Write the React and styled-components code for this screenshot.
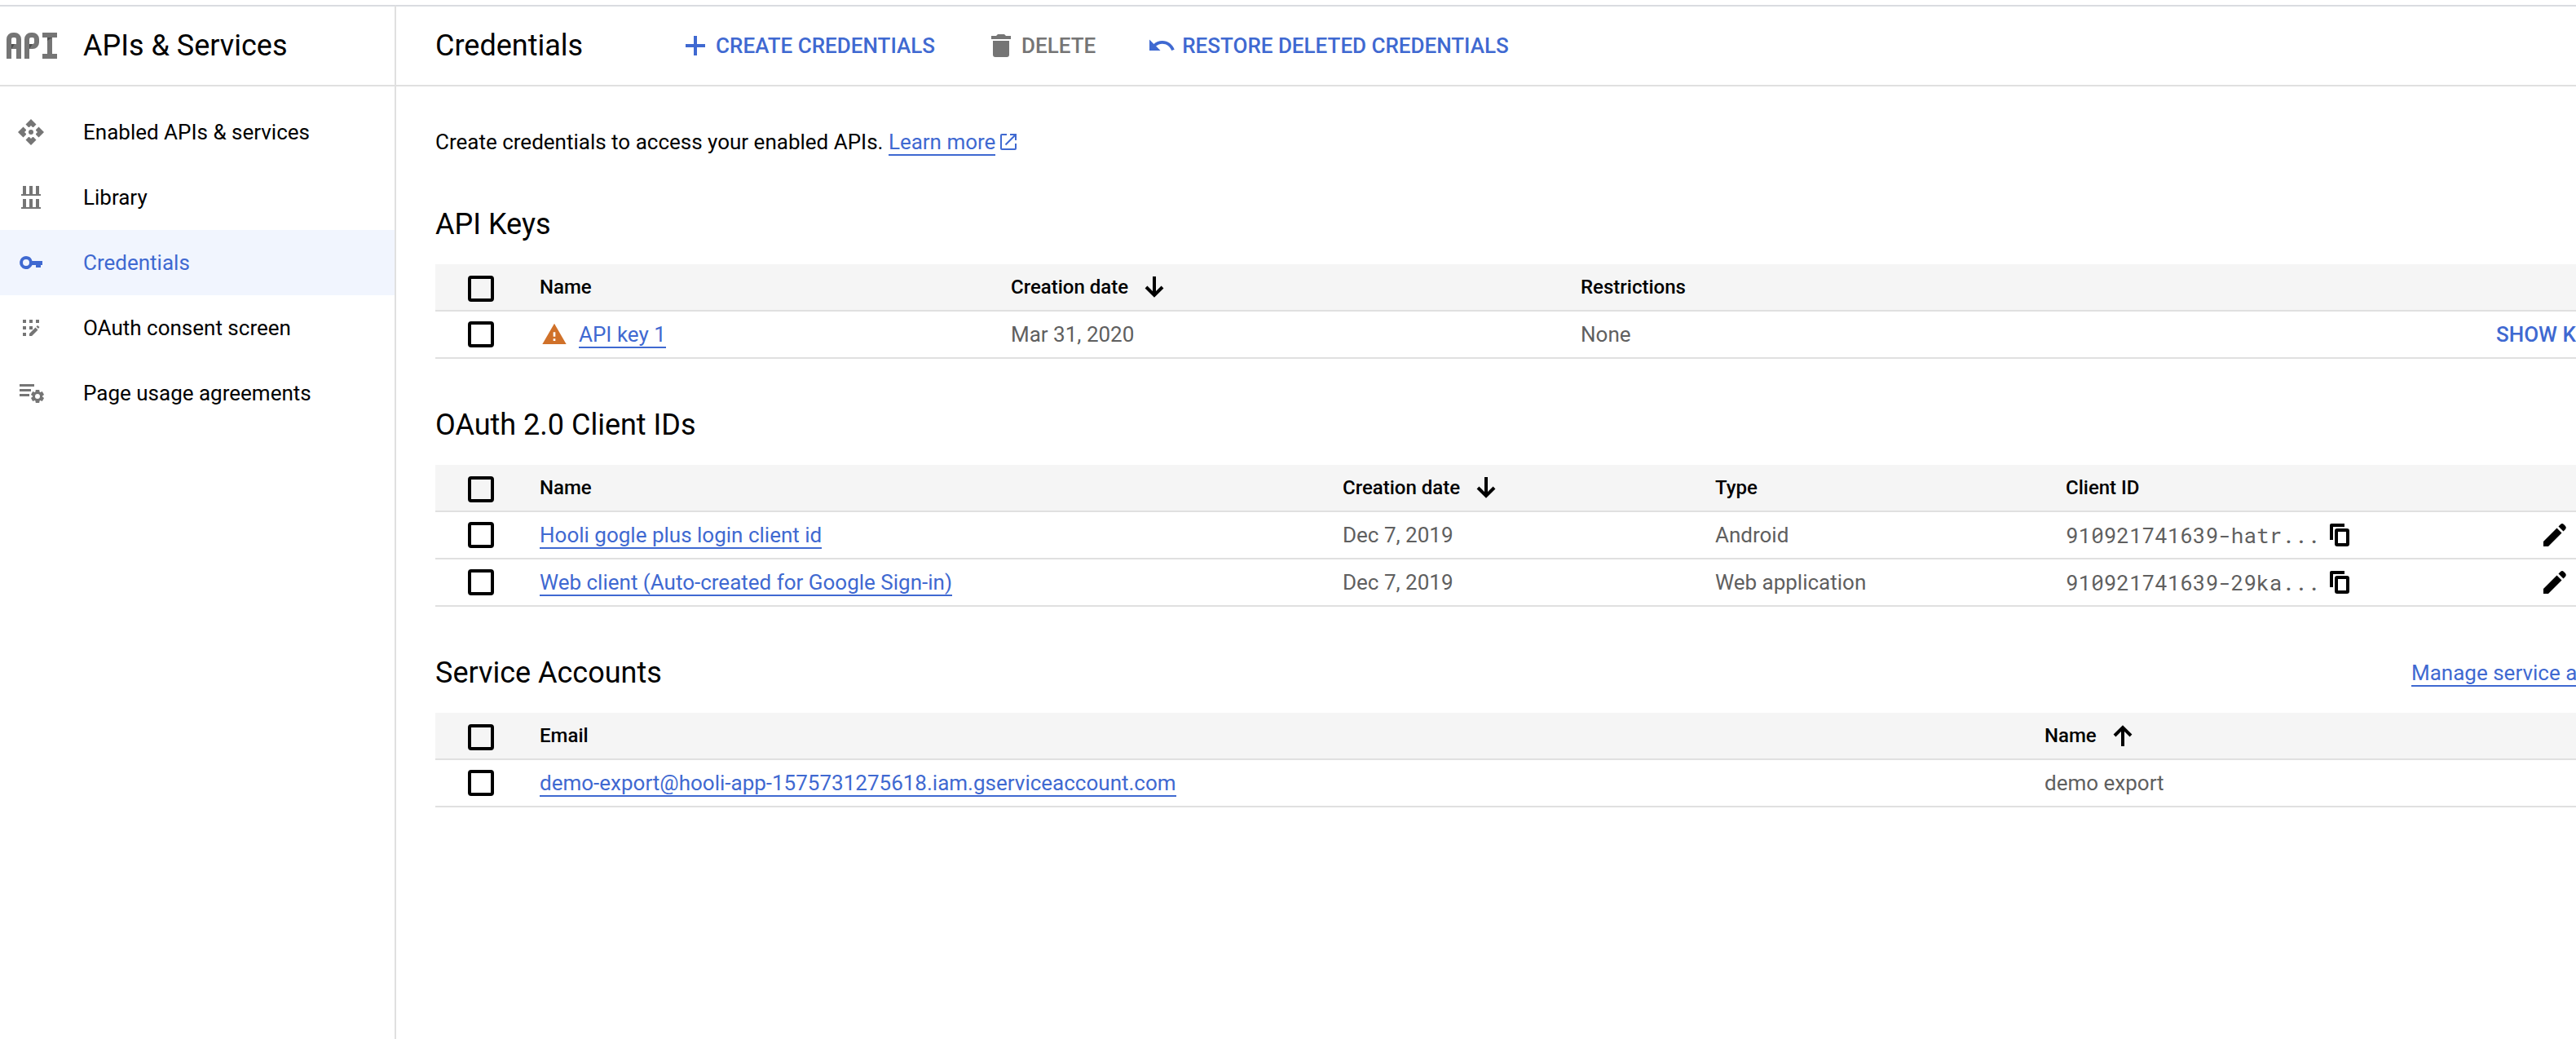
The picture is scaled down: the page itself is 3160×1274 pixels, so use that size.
import React from "react";
import styled, { createGlobalStyle } from "styled-components";
import { MdUndo, MdWarning } from "react-icons/md";

const blue = "#3f69d1";
const iconGray = "#757575";
const line = "#e0e0e0";

const GlobalStyle = createGlobalStyle`
  *, *::before, *::after { box-sizing: border-box; }
  body {
    margin: 0;
    background: #fff;
    color: #000;
    font-family: Roboto, "Liberation Sans", sans-serif;
    font-size: 26px;
    line-height: 40px;
    overflow-x: hidden;
  }
  svg { display: block; flex: none; }
`;

const Shell = styled.div`
  display: flex;
  min-height: 100vh;
  padding-top: 6px;
`;

const Sidebar = styled.aside`
  flex: none;
  width: 486px;
  border-top: 2px solid #dadce0;
  border-right: 2px solid ${line};
`;

const Brand = styled.div`
  display: flex;
  align-items: center;
  gap: 32px;
  height: 98px;
  padding-left: 8px;
  border-bottom: 2px solid ${line};
`;

const Title = styled.h1`
  margin: 0;
  font-size: 36px;
  line-height: 42px;
  font-weight: 400;
  white-space: nowrap;
`;

const NavList = styled.nav`
  display: flex;
  flex-direction: column;
  padding-top: 16px;
`;

const NavLink = styled.a`
  display: flex;
  align-items: center;
  gap: 46px;
  height: 80px;
  padding-left: 20px;
  text-decoration: none;
  color: ${(p) => (p.$active ? blue : "#000")};
  background: ${(p) => (p.$active ? "#f1f5fe" : "transparent")};

  svg { color: ${(p) => (p.$active ? blue : iconGray)}; }
`;

const Main = styled.main`
  flex: 1;
  min-width: 0;
  overflow: hidden;
  border-top: 2px solid #dadce0;
`;

const Toolbar = styled.header`
  display: flex;
  align-items: center;
  gap: 120px;
  height: 98px;
  padding-left: 48px;
  border-bottom: 2px solid ${line};
`;

const Actions = styled.div`
  display: flex;
  gap: 63px;
`;

const TextButton = styled.button`
  display: inline-flex;
  align-items: center;
  gap: 7px;
  padding: 0;
  border: 0;
  background: none;
  color: ${(p) => (p.disabled ? iconGray : blue)};
  font: inherit;
  font-weight: 500;
  white-space: nowrap;
  cursor: pointer;
`;

const IconButton = styled.button`
  display: block;
  padding: 0;
  border: 0;
  background: none;
  color: #000;
  cursor: pointer;
`;

/* The tables keep running past the right edge of the viewport. */
const Content = styled.div`
  margin-right: -94px;
  padding: 48px 0 0 48px;
`;

const Intro = styled.p`
  display: flex;
  align-items: center;
  gap: 6px;
  margin: 0;
`;

const Link = styled.a`
  color: ${blue};
  text-decoration: none;
  border-bottom: 2px solid ${blue};
`;

const ExternalMark = styled.span`
  color: ${blue};
`;

const SectionHead = styled.div`
  display: flex;
  align-items: center;
  justify-content: space-between;
  height: 42px;
  margin: 60px 0 28px;
`;

const SectionTitle = styled.h2`
  margin: 0;
  font-size: 36px;
  line-height: 42px;
  font-weight: 400;
`;

const Table = styled.table`
  width: 100%;
  table-layout: fixed;
  border-collapse: separate;
  border-spacing: 0;
`;

const Col = styled.col`
  width: ${(p) => (p.$width ? `${p.$width}px` : "auto")};
`;

const HeadCell = styled.th`
  height: 58px;
  padding: ${(p) => (p.$select ? "4px 0 0" : "0")};
  border-bottom: 2px solid ${line};
  background: #f5f5f5;
  font-size: 24px;
  font-weight: 500;
  text-align: left;
  white-space: nowrap;
`;

const Cell = styled.td`
  height: 58px;
  padding: 0;
  border-bottom: 2px solid ${line};
  color: #5f5f5f;
  white-space: nowrap;
`;

const CellRow = styled.div`
  display: flex;
  align-items: center;
  gap: ${(p) => p.$gap || 0}px;
`;

const WarningMark = styled.span`
  margin: 0 14px 0 2px;
  color: #d07129;
`;

const Checkbox = styled.input`
  appearance: none;
  display: block;
  width: 32px;
  height: 32px;
  margin: 0 0 0 40px;
  border: 4px solid #000;
  border-radius: 4px;

  &:checked { background: ${blue}; border-color: ${blue}; }
`;

const Mono = styled.span`
  font-family: "Roboto Mono", "DejaVu Sans Mono", "Liberation Mono", monospace;
`;

const ApiLogo = () => (
  <svg width="62" height="32" viewBox="0 0 62 32" fill="none" stroke={iconGray} strokeWidth="6" aria-hidden="true">
    <path d="M3 32V8a5 5 0 0 1 5-5h2a5 5 0 0 1 5 5v24M3 17h12" />
    <path d="M25 32V8a5 5 0 0 1 5-5h2a5 5 0 0 1 5 5v4a5 5 0 0 1-5 5h-7" />
    <path d="M44 3h18M44 29h18M53 3v26" />
    <path d="M6 14h4l-4 6zM28 14h4l-4 6zM50 6h6l-6 4z" fill="#4d4d4d" stroke="none" />
  </svg>
);

const ApiIcon = () => (
  <svg width="36" height="36" viewBox="0 0 36 36" fill="currentColor" aria-hidden="true">
    {[0, 90, 180, 270].map((a) => (
      <path key={a} d="M18 2l6.500 6.500-3.500 3.500h-1l-2-2-2 2h-1l-3.500-3.500z" transform={`rotate(${a} 18 18)`} />
    ))}
    <circle cx="18" cy="18" r="3" />
  </svg>
);

const LibraryIcon = () => (
  <svg width="36" height="36" viewBox="0 0 36 36" fill="currentColor" aria-hidden="true">
    <path d="M8 4h4v10h4V4h4v10h4V4h4v10h2v2H6v-2h2zM8 20h4v10h4V20h4v10h4V20h4v10h2v2H6v-2h2z" />
  </svg>
);

const KeyIcon = () => (
  <svg width="36" height="36" viewBox="0 0 36 36" fill="currentColor" aria-hidden="true">
    <path
      fillRule="evenodd"
      d="M12 10a8 8 0 0 1 7.5 6H32v5h-2v3h-6v-3h-4.500A8 8 0 1 1 12 10zm0 4a4 4 0 1 0 0 8 4 4 0 0 0 0-8z"
    />
  </svg>
);

const ConsentIcon = () => (
  <svg width="36" height="36" viewBox="0 0 36 36" fill="currentColor" aria-hidden="true">
    <path d="M8 8h4v4H8zM16 8h4v4h-4zM24 8h4v4h-4zM8 16h4v4H8zM16 16h4v4h-4zM8 24h4v4H8z" />
    <path d="M16 28v-3l7.500-7.500 3 3L19 28zM24.500 16.500l1.500-1.500 2.500 2-1.500 2z" />
  </svg>
);

const AgreementIcon = () => (
  <svg width="36" height="36" viewBox="0 0 36 36" fill="currentColor" aria-hidden="true">
    <path d="M4 7h18v3H4zM4 13h14v3H4zM4 19h12v3H4z" />
    <g transform="translate(26 22)">
      <circle r="4.500" fill="none" stroke="currentColor" strokeWidth="3" />
      {[0, 60, 120, 180, 240, 300].map((a) => (
        <path key={a} d="M-2.200-8h4.400l.6 4h-5.600z" transform={`rotate(${a})`} />
      ))}
    </g>
  </svg>
);

const PlusIcon = () => (
  <svg width="36" height="36" viewBox="0 0 36 36" fill="currentColor" aria-hidden="true">
    <path d="M16 6h4v10h10v4H20v10h-4V20H6v-4h10z" />
  </svg>
);

const TrashIcon = () => (
  <svg width="36" height="36" viewBox="0 0 36 36" fill="currentColor" aria-hidden="true">
    <path d="M14 4h8l2 2h6v4H6V6h6zM8 12h20v17a3 3 0 0 1-3 3H11a3 3 0 0 1-3-3z" />
  </svg>
);

const CopyIcon = () => (
  <svg width="36" height="36" viewBox="0 0 36 36" fill="none" stroke="currentColor" strokeWidth="4" aria-hidden="true">
    <path d="M24 6H8v18" strokeLinejoin="round" />
    <rect x="14" y="12" width="14" height="18" rx="1" />
  </svg>
);

const PencilIcon = () => (
  <svg width="36" height="36" viewBox="0 0 36 36" fill="currentColor" aria-hidden="true">
    <path d="M4 32v-6L20.500 9.500l6 6L10 32z" />
    <path d="M22.500 7.500l2.500-2.500a3 3 0 0 1 4 0l2 2a3 3 0 0 1 0 4l-2.500 2.500z" />
  </svg>
);

const ExternalIcon = () => (
  <svg width="20" height="20" viewBox="0 0 20 20" fill="none" stroke="currentColor" strokeWidth="2" aria-hidden="true">
    <path d="M8 1H2a1 1 0 0 0-1 1v16a1 1 0 0 0 1 1h16a1 1 0 0 0 1-1v-6M12 1h7v7M19 1L6.500 13.500" />
  </svg>
);

const SortIcon = ({ up }) => (
  <svg width="24" height="28" viewBox="0 0 24 28" fill="none" stroke="currentColor" strokeWidth="4" aria-hidden="true">
    <path d={up ? "M12 27V4M2 14L12 4l10 10" : "M12 1v23M2 14l10 10 10-10"} />
  </svg>
);

const navItems = [
  { label: "Enabled APIs & services", icon: <ApiIcon /> },
  { label: "Library", icon: <LibraryIcon /> },
  { label: "Credentials", icon: <KeyIcon />, active: true },
  { label: "OAuth consent screen", icon: <ConsentIcon /> },
  { label: "Page usage agreements", icon: <AgreementIcon /> },
];

const clients = [
  { name: "Hooli gogle plus login client id", date: "Dec 7, 2019", type: "Android", id: "910921741639-hatr..." },
  { name: "Web client (Auto-created for Google Sign-in)", date: "Dec 7, 2019", type: "Web application", id: "910921741639-29ka..." },
];

function Section({ title, action, columns, children }) {
  return (
    <section>
      <SectionHead>
        <SectionTitle>{title}</SectionTitle>
        {action}
      </SectionHead>
      <Table>
        <colgroup>
          <Col $width={128} />
          {columns.map((c, i) => <Col key={i} $width={c.width} />)}
        </colgroup>
        <thead>
          <tr>
            <HeadCell $select>
              <Checkbox type="checkbox" aria-label={`Select all ${title}`} />
            </HeadCell>
            {columns.map((c, i) => (
              <HeadCell key={i} scope="col">
                <CellRow $gap={20}>
                  {c.label}
                  {c.sort && <SortIcon up={c.sort === "up"} />}
                </CellRow>
              </HeadCell>
            ))}
          </tr>
        </thead>
        <tbody>{children}</tbody>
      </Table>
    </section>
  );
}

const SelectCell = ({ name }) => (
  <Cell>
    <Checkbox type="checkbox" aria-label={`Select ${name}`} />
  </Cell>
);

export default function App() {
  return (
    <>
      <GlobalStyle />
      <Shell>
        <Sidebar>
          <Brand>
            <ApiLogo />
            <Title as="div">APIs &amp; Services</Title>
          </Brand>
          <NavList>
            {navItems.map((item) => (
              <NavLink key={item.label} href="#" $active={item.active} aria-current={item.active ? "page" : undefined}>
                {item.icon}
                {item.label}
              </NavLink>
            ))}
          </NavList>
        </Sidebar>
        <Main>
          <Toolbar>
            <Title>Credentials</Title>
            <Actions>
              <TextButton type="button"><PlusIcon />CREATE CREDENTIALS</TextButton>
              <TextButton type="button" disabled><TrashIcon />DELETE</TextButton>
              <TextButton type="button"><MdUndo size={36} />RESTORE DELETED CREDENTIALS</TextButton>
            </Actions>
          </Toolbar>
          <Content>
            <Intro>
              <span>
                Create credentials to access your enabled APIs. <Link href="#">Learn more</Link>
              </span>
              <ExternalMark><ExternalIcon /></ExternalMark>
            </Intro>

            <Section
              title="API Keys"
              columns={[
                { label: "Name" },
                { label: "Creation date", sort: "down", width: 699 },
                { label: "Restrictions", width: 1123 },
                { label: "", width: 192 },
              ]}
            >
              <tr>
                <SelectCell name="API key 1" />
                <Cell>
                  <CellRow>
                    <WarningMark><MdWarning size={32} /></WarningMark>
                    <span><Link href="#">API key 1</Link></span>
                  </CellRow>
                </Cell>
                <Cell>Mar 31, 2020</Cell>
                <Cell>None</Cell>
                <Cell><TextButton type="button">SHOW KEY</TextButton></Cell>
              </tr>
            </Section>

            <Section
              title="OAuth 2.0 Client IDs"
              columns={[
                { label: "Name" },
                { label: "Creation date", sort: "down", width: 457 },
                { label: "Type", width: 430 },
                { label: "Client ID", width: 582 },
                { label: "", width: 138 },
              ]}
            >
              {clients.map((c) => (
                <tr key={c.id}>
                  <SelectCell name={c.name} />
                  <Cell><Link href="#">{c.name}</Link></Cell>
                  <Cell>{c.date}</Cell>
                  <Cell>{c.type}</Cell>
                  <Cell>
                    <CellRow $gap={6}>
                      <Mono>{c.id}</Mono>
                      <IconButton type="button" aria-label={`Copy client ID of ${c.name}`}><CopyIcon /></IconButton>
                    </CellRow>
                  </Cell>
                  <Cell>
                    <IconButton type="button" aria-label={`Edit ${c.name}`}><PencilIcon /></IconButton>
                  </Cell>
                </tr>
              ))}
            </Section>

            <Section
              title="Service Accounts"
              action={<span><Link href="#">Manage service accounts</Link></span>}
              columns={[{ label: "Email" }, { label: "Name", sort: "up", width: 746 }]}
            >
              <tr>
                <SelectCell name="demo-export" />
                <Cell><Link href="#">demo-export@hooli-app-1575731275618.iam.gserviceaccount.com</Link></Cell>
                <Cell>demo export</Cell>
              </tr>
            </Section>
          </Content>
        </Main>
      </Shell>
    </>
  );
}
